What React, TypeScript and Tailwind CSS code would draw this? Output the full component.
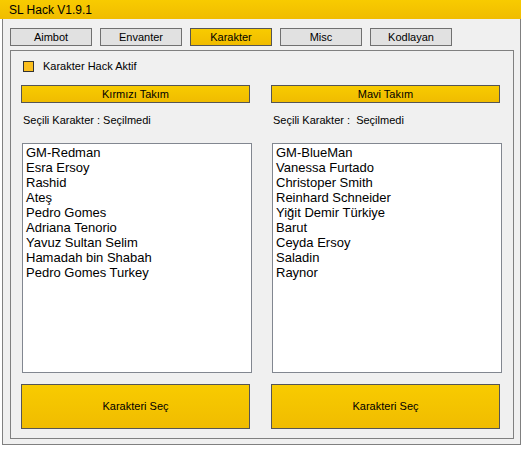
import React from 'react';

const tabs = ['Aimbot', 'Envanter', 'Karakter', 'Misc', 'Kodlayan'];
const red = ['GM-Redman', 'Esra Ersoy', 'Rashid', 'Ateş', 'Pedro Gomes', 'Adriana Tenorio', 'Yavuz Sultan Selim', 'Hamadah bin Shabah', 'Pedro Gomes Turkey'];
const blue = ['GM-BlueMan', 'Vanessa Furtado', 'Christoper Smith', 'Reinhard Schneider', 'Yiğit Demir Türkiye', 'Barut', 'Ceyda Ersoy', 'Saladin', 'Raynor'];

const ui = "font-['Liberation_Sans',Arial,sans-serif]";
const yellow = 'bg-gradient-to-b from-[#f8cb00] to-[#f0bc00]';

function Team({title, label, items}: {title: string; label: string; items: string[]}) {
    return (
        <div className="flex flex-col">
            <div className={`${yellow} flex h-[18px] items-center justify-center border border-[#555] text-[11px] text-black`}>
                {title}
            </div>
            <div className="mt-[11px] h-[12px] pl-[2px] text-[11px] leading-[12px] text-black whitespace-pre">{label}</div>
            <div className="mt-[17px] ml-[1px] h-[230px] w-[230px] border border-[#828790] bg-white pl-[3px] pt-[1px]">
                {items.map((n) => (
                    <div key={n} className="text-[13px] leading-[15px] text-black">{n}</div>
                ))}
            </div>
            <div className={`${yellow} mt-[11px] flex h-[45px] items-center justify-center border border-[#555] text-[11px] text-black`}>
                Karakteri Seç
            </div>
        </div>
    );
}

export default function App() {
    return (
        <div className={`${ui} h-[449px] w-[523px] bg-white`}>
            <div className={`${yellow} flex h-[19px] w-[521px] items-center pl-[9px] text-[12px] text-black`}>
                SL Hack V1.9.1
            </div>
            <div className="ml-[2px] h-[426px] w-[519px] border-x border-b border-[#808080] bg-[#f0f0f0] pl-[7px] pt-[9px]">
                <div className="flex gap-[8px]">
                    {tabs.map((t) => (
                        <div
                            key={t}
                            className={`flex h-[18px] w-[82px] items-center justify-center border text-[11px] text-black ${
                                t === 'Karakter' ? `${yellow} border-[#555]` : 'border-[#707070] bg-[#e1e1e1]'
                            }`}
                        >
                            {t}
                        </div>
                    ))}
                </div>
                <div className="mt-[4px] h-[389px] w-[504px] border border-[#808080] pl-[10px] pt-[10px]">
                    <div className="flex h-[11px] items-center gap-[9px] pl-[2px]">
                        <div className="h-[11px] w-[11px] border border-[#333] bg-[#fbbf1e]" />
                        <span className="text-[11px] leading-[11px] text-black">Karakter Hack Aktif</span>
                    </div>
                    <div className="mt-[13px] grid grid-cols-[229px_229px] gap-[21px]">
                        <Team title="Kırmızı Takım" label="Seçili Karakter : Seçilmedi" items={red} />
                        <Team title="Mavi Takım" label="Seçili Karakter :  Seçilmedi" items={blue} />
                    </div>
                </div>
            </div>
        </div>
    );
}
